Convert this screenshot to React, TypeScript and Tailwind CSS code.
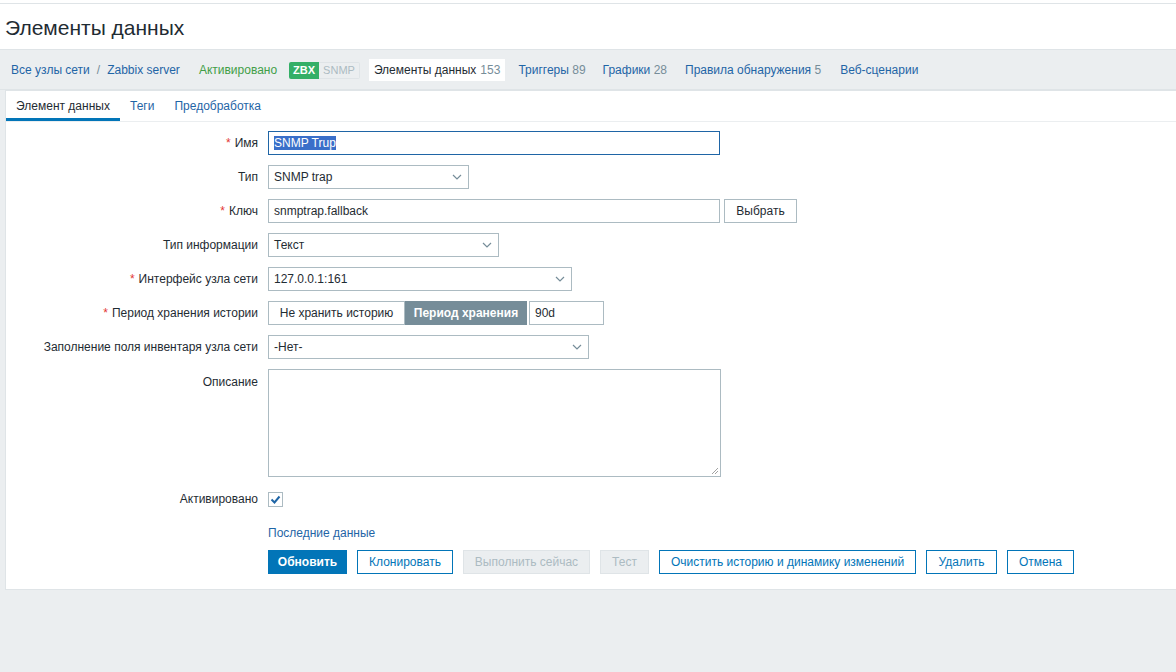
import React from "react";

const font = "font-['Liberation_Sans',Arial,sans-serif]";

function Chevron() {
  return (
    <svg width="10" height="6" viewBox="0 0 10 6" className="shrink-0">
      <path d="M1 1l4 4 4-4" fill="none" stroke="#768d99" strokeWidth="1.2" />
    </svg>
  );
}

function Select({ value, width }: { value: string; width: string }) {
  return (
    <div
      className={`${width} h-6 border border-[#acbbc2] bg-white flex items-center justify-between pl-[5px] pr-[6px] text-[12px] text-[#1f2c33]`}
    >
      <span>{value}</span>
      <Chevron />
    </div>
  );
}

function Label({ text, required }: { text: string; required?: boolean }) {
  return (
    <div className="text-right text-[12px] text-[#1f2c33] leading-6">
      {required && <span className="text-[#e33734] mr-1">*</span>}
      {text}
    </div>
  );
}

function Row({ label, required, children }: { label: string; required?: boolean; children: React.ReactNode }) {
  return (
    <div className="grid grid-cols-[252px_1fr] gap-x-[10px] items-center">
      <Label text={label} required={required} />
      <div className="flex items-center">{children}</div>
    </div>
  );
}

export default function App() {
  return (
    <div className={`${font} min-h-[672px] bg-[#ebeef0] text-[#1f2c33]`}>
      {/* header */}
      <div className="h-[3px] bg-white" />
      <div className="h-[47px] bg-white border-t border-[#dfe4e7] border-b flex items-center pl-[5px]">
        <h1 className="text-[21px] leading-none text-[#1f2c33] font-normal pt-[1px]">Элементы данных</h1>
      </div>

      {/* nav */}
      <div className="h-[40px] flex items-center pl-[11px] text-[12px] border-b border-[#dfe4e7] pt-[1px]">
        <a className="text-[#1f65a6]">Все узлы сети</a>
        <span className="mx-[7px] text-[#768d99]">/</span>
        <a className="text-[#1f65a6]">Zabbix server</a>
        <span className="ml-[19px] text-[#429e47]">Активировано</span>
        <span className="ml-[12px] flex h-[17px] text-[11px] font-bold leading-[17px]">
          <span className="bg-[#34af67] text-white px-[4px] rounded-l-[2px]">ZBX</span>
          <span className="text-[#acbbc2] font-normal border border-[#dfe4e7] border-l-0 px-[4px] leading-[15px] rounded-r-[2px]">SNMP</span>
        </span>
        <span className="ml-[9px] bg-white h-[22px] px-[5px] flex items-center text-[#1f2c33]">
          Элементы данных <span className="text-[#768d99] ml-1">153</span>
        </span>
        <a className="ml-[13px] text-[#1f65a6]">
          Триггеры <span className="text-[#768d99]">89</span>
        </a>
        <a className="ml-[17px] text-[#1f65a6]">
          Графики <span className="text-[#768d99]">28</span>
        </a>
        <a className="ml-[18px] text-[#1f65a6]">
          Правила обнаружения <span className="text-[#768d99]">5</span>
        </a>
        <a className="ml-[19px] text-[#1f65a6]">Веб-сценарии</a>
      </div>

      {/* box */}
      <div className="ml-[5px] bg-white border border-[#dfe4e7] border-r-0">
        <div className="flex h-[31px] border-b border-[#ebeef0] text-[12px]">
          <div className="w-[114px] flex items-center justify-center border-b-[3px] border-[#0275b8] pt-[3px] text-[#1f2c33]">
            Элемент данных
          </div>
          <div className="flex items-center px-[10px] text-[#1f65a6]">Теги</div>
          <div className="flex items-center px-[10px] text-[#1f65a6]">Предобработка</div>
        </div>

        <div className="pt-[9px] pb-[15px] flex flex-col gap-[10px]">
          <Row label="Имя" required>
            <div className="w-[452px] h-6 border border-[#1f65a6] flex items-center px-[5px] text-[12px]">
              <span className="bg-[#3a6fc9] text-white leading-[14px]">SNMP Trup</span>
            </div>
          </Row>
          <Row label="Тип">
            <Select value="SNMP trap" width="w-[201px]" />
          </Row>
          <Row label="Ключ" required>
            <div className="w-[452px] h-6 border border-[#acbbc2] flex items-center px-[5px] text-[12px]">
              snmptrap.fallback
            </div>
            <button className="ml-[4px] h-6 w-[73px] border border-[#acbbc2] bg-white text-[12px] text-[#1f2c33]">
              Выбрать
            </button>
          </Row>
          <Row label="Тип информации">
            <Select value="Текст" width="w-[231px]" />
          </Row>
          <Row label="Интерфейс узла сети" required>
            <Select value="127.0.0.1:161" width="w-[304px]" />
          </Row>
          <Row label="Период хранения истории" required>
            <div className="flex h-6 text-[12px]">
              <div className="w-[137px] border border-[#acbbc2] flex items-center justify-center">Не хранить историю</div>
              <div className="w-[122px] bg-[#768d99] text-white font-bold flex items-center justify-center">Период хранения</div>
            </div>
            <div className="ml-[2px] w-[75px] h-6 border border-[#acbbc2] flex items-center px-[5px] text-[12px]">90d</div>
          </Row>
          <Row label="Заполнение поля инвентаря узла сети">
            <Select value="-Нет-" width="w-[321px]" />
          </Row>
          <div className="grid grid-cols-[252px_1fr] gap-x-[10px] items-start">
            <div className="text-right text-[12px] pt-[4px]">Описание</div>
            <div className="relative w-[453px] h-[108px] border border-[#acbbc2]">
              <svg width="8" height="8" viewBox="0 0 8 8" className="absolute right-[1px] bottom-[1px]">
                <path d="M7 1L1 7M7 4L4 7" stroke="#8a8a8a" strokeWidth="0.8" />
              </svg>
            </div>
          </div>
          <Row label="Активировано">
            <div className="w-[15px] h-[15px] border border-[#acbbc2] flex items-center justify-center">
              <svg width="11" height="9" viewBox="0 0 11 9">
                <path d="M1.5 4.5l3 3 5-6" fill="none" stroke="#1f65a6" strokeWidth="2" />
              </svg>
            </div>
          </Row>
          <div className="grid grid-cols-[252px_1fr] gap-x-[10px] h-6 items-center">
            <div />
            <a className="text-[12px] text-[#1f65a6]">Последние данные</a>
          </div>
          <div className="grid grid-cols-[252px_1fr] gap-x-[10px] -mt-[5px]">
            <div />
            <div className="flex gap-[10px] text-[12px]">
              <button className="h-6 w-[79px] bg-[#0275b8] border border-[#0275b8] text-white font-bold">Обновить</button>
              <button className="h-6 w-[96px] bg-white border border-[#0275b8] text-[#0275b8]">Клонировать</button>
              <button className="h-6 w-[127px] bg-[#ebeef0] border border-[#dfe4e7] text-[#acbbc2]">Выполнить сейчас</button>
              <button className="h-6 w-[49px] bg-[#ebeef0] border border-[#dfe4e7] text-[#acbbc2]">Тест</button>
              <button className="h-6 w-[257px] bg-white border border-[#0275b8] text-[#0275b8]">Очистить историю и динамику изменений</button>
              <button className="h-6 w-[71px] bg-white border border-[#0275b8] text-[#0275b8]">Удалить</button>
              <button className="h-6 w-[67px] bg-white border border-[#0275b8] text-[#0275b8]">Отмена</button>
            </div>
          </div>
        </div>
      </div>
    </div>
  );
}
